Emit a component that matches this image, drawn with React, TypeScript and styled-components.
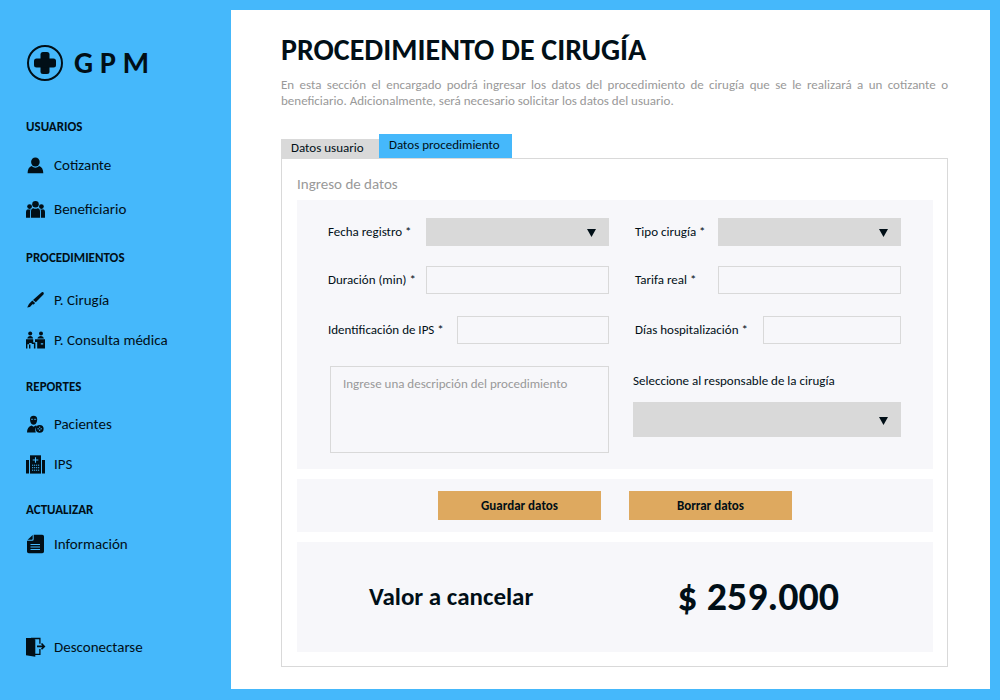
import React from "react";
import styled, { createGlobalStyle } from "styled-components";

const color = {
  blue: "#45b8fb",
  ink: "#010f17",
  muted: "#999999",
  line: "#d9d9d9",
  panel: "#f7f7fa",
  gold: "#dea95f",
};

const GlobalStyle = createGlobalStyle`
  *, *::before, *::after { box-sizing: border-box; }
  body {
    margin: 0;
    background: ${color.blue};
    color: ${color.ink};
    font-family: Calibri, Carlito, Lato, sans-serif;
    font-size: 13px;
    line-height: 16px;
  }
  button, input, select, textarea { font: inherit; color: inherit; }
`;

const Page = styled.div`
  display: flex;
  min-height: 100vh;
  padding: 10px 10px 11px 0;
`;

const Sidebar = styled.aside`
  flex: 0 0 231px;
  display: flex;
  flex-direction: column;
  padding: 34px 10px 22px 26px;
`;

const Brand = styled.div`
  display: flex;
  align-items: center;
  gap: 10px;
  height: 38px;
  margin-bottom: 35px;
  font-size: 30px;
  line-height: 38px;
  font-weight: 700;
`;

const NavGroup = styled.section<{ $after: number }>`
  margin-bottom: ${(p) => p.$after}px;
`;

const NavHeading = styled.h2<{ $after: number }>`
  margin: 0 0 ${(p) => p.$after}px;
  font-size: 13px;
  line-height: 20px;
  font-weight: 700;
`;

const NavList = styled.ul<{ $gap?: number }>`
  display: flex;
  flex-direction: column;
  gap: ${(p) => p.$gap ?? 0}px;
  margin: 0;
  padding: 0;
  list-style: none;
`;

const NavLink = styled.a`
  display: flex;
  align-items: center;
  gap: 8px;
  height: 40px;
  color: inherit;
  font-size: 15px;
  line-height: 20px;
  text-decoration: none;
`;

const Logout = styled(NavLink)`
  margin-top: auto;
`;

const Main = styled.main`
  flex: 1;
  min-width: 0;
  display: flex;
  flex-direction: column;
  padding: 22px 42px 22px 50px;
  background: #fff;
`;

const Title = styled.h1`
  margin: 0 0 9px;
  font-size: 30px;
  line-height: 36px;
  font-weight: 700;
`;

const Intro = styled.p`
  margin: 0 0 25px;
  color: ${color.muted};
  text-align: justify;
`;

const Tabs = styled.div`
  display: flex;
  align-items: flex-end;
`;

const Tab = styled.button<{ $active?: boolean }>`
  height: ${(p) => (p.$active ? 24 : 19)}px;
  min-width: ${(p) => (p.$active ? 133 : 98)}px;
  padding: 0 10px 2px;
  border: 0;
  background: ${(p) => (p.$active ? color.blue : color.line)};
  text-align: left;
  white-space: nowrap;
`;

const Card = styled.form`
  flex: 1;
  display: flex;
  flex-direction: column;
  gap: 10px;
  padding: 15px 14px 14px 15px;
  border: 1px solid ${color.line};
`;

const CardTitle = styled.h2`
  margin: 0 0 -4px;
  color: ${color.muted};
  font-size: 15px;
  line-height: 20px;
  font-weight: 400;
`;

const Fields = styled.div`
  display: grid;
  grid-template-columns: minmax(0, 281fr) minmax(0, 268fr);
  grid-template-rows: 48px 50px 50px auto;
  column-gap: 24px;
  align-items: start;
  padding: 18px 32px 16px 31px;
  background: ${color.panel};
`;

const Field = styled.div<{ $inset?: boolean }>`
  display: flex;
  align-items: center;
  padding-left: ${(p) => (p.$inset ? 2 : 0)}px;
`;

const Label = styled.label<{ $width: number }>`
  flex: 0 0 ${(p) => p.$width}px;
  white-space: nowrap;
`;

const TextInput = styled.input`
  flex: 1;
  min-width: 0;
  height: 28px;
  padding: 0 8px;
  border: 1px solid ${color.line};
  border-radius: 0;
  background: transparent;
`;

const SelectBox = styled.div<{ $tall?: boolean }>`
  position: relative;
  flex: 1;
  min-width: 0;
  height: ${(p) => (p.$tall ? 35 : 28)}px;

  select {
    display: block;
    width: 100%;
    height: 100%;
    padding: 0 30px 0 8px;
    border: 0;
    border-radius: 0;
    background: ${color.line};
    appearance: none;
  }

  svg {
    position: absolute;
    right: 13px;
    top: calc(50% - 3px);
    pointer-events: none;
  }
`;

const Description = styled.textarea`
  display: block;
  height: 87px;
  margin-left: 2px;
  padding: 9px 12px;
  border: 1px solid ${color.line};
  border-radius: 0;
  background: transparent;
  resize: none;

  &::placeholder { color: ${color.muted}; opacity: 1; }
`;

const Responsible = styled.div`
  label {
    display: block;
    margin-bottom: 6px;
    line-height: 30px;
  }
`;

const Actions = styled.div`
  display: flex;
  justify-content: center;
  gap: 28px;
  padding: 12px;
  background: ${color.panel};
`;

const ActionButton = styled.button`
  width: 163px;
  height: 29px;
  padding: 0;
  border: 0;
  background: ${color.gold};
  font-weight: 700;
`;

const Total = styled.div`
  flex: 1;
  display: flex;
  align-items: center;
  justify-content: space-between;
  min-height: 110px;
  padding: 0 94px 0 72px;
  background: ${color.panel};
  font-weight: 700;
`;

const TotalLabel = styled.span`
  font-size: 25px;
  line-height: 32px;
`;

const TotalAmount = styled.output`
  font-size: 40px;
  line-height: 48px;
`;

function Icon({ children }: { children: React.ReactNode }) {
  return (
    <svg width="20" height="20" viewBox="0 0 20 20" fill={color.ink} aria-hidden="true">
      {children}
    </svg>
  );
}

const LogoIcon = () => (
  <svg width="38" height="38" viewBox="0 0 38 38" fill={color.ink} aria-hidden="true">
    <circle cx="19" cy="19" r="17" fill="none" stroke={color.ink} strokeWidth="2" />
    <rect x="14.5" y="8" width="9" height="22" rx="2.5" />
    <rect x="8" y="14.5" width="22" height="9" rx="2.5" />
  </svg>
);

const UserIcon = () => (
  <Icon>
    <ellipse cx="9.4" cy="7" rx="4.3" ry="4.5" />
    <path d="M1.6 18.2C1.6 14.400 2.900 12.200 5.700 11C8 13.200 10.800 13.200 13.100 11C15.900 12.200 17.300 14.400 17.300 18.200Z" />
  </Icon>
);

const GroupIcon = () => (
  <Icon>
    <circle cx="9.5" cy="5.3" r="3.3" />
    <circle cx="3.6" cy="7.6" r="2.4" />
    <circle cx="15.4" cy="7.6" r="2.4" />
    <path d="M5 18.8V12.4Q5 9.4 7.4 9.2Q9.5 10.4 11.6 9.200Q14 9.400 14 12.400V18.800Z" />
    <path d="M0 18.800V12.800Q0 10.400 2 10.200Q3.300 10.800 4.600 10.300Q4.100 11.200 4.100 12.600V18.800Z" />
    <path d="M19 18.800V12.800Q19 10.400 17 10.200Q15.700 10.800 14.400 10.300Q14.900 11.200 14.900 12.600V18.800Z" />
  </Icon>
);

const ScalpelIcon = () => (
  <Icon>
    <path d="M17.300 2.300Q18.400 3.300 17.400 4.500L9.800 12.200L7 9.900L14.900 2.900Q16.300 1.700 17.300 2.300Z" />
    <path d="M6.300 10.500L9.100 12.900L7.700 14.400L6.400 14.200Q4.800 17.200 1.200 17.600Q2 14.200 6.300 10.500Z" />
  </Icon>
);

const ConsultIcon = () => (
  <Icon>
    <circle cx="4.2" cy="3.500" r="2" />
    <circle cx="15" cy="3.500" r="2" />
    <path d="M1.400 8.600Q1.600 5.900 4.200 5.900Q6.800 5.900 7 8.600Z" />
    <path d="M11.400 8.600Q12 5.900 15 5.900Q17.500 5.900 18 8.600Z" />
    <path d="M0 9.200H7.200V12.400H9.400V18.600H7.900V14H5.700V13H3.200V14.200H1.400V18.600H0Z" />
    <path d="M3 14.600H4.400V18.600H3Z" />
    <path d="M9 9.200H19V18.600H11.200V12H9ZM14.800 13.200V14.400H17.200V13.200Z" fillRule="evenodd" />
  </Icon>
);

const PatientIcon = () => (
  <Icon>
    <path d="M4 5.400Q4 1.700 7.600 1.700Q11.200 1.700 11.200 5.400L10.900 7.600Q10 10.800 7.600 10.800Q5.200 10.800 4.300 7.600Z" />
    <path d="M5 5.300H7.100M8.100 5.300H10.200" fill="none" stroke={color.blue} strokeWidth=".8" />
    <path d="M1 18.600Q1 12.600 5.500 11.400L7.600 12.800L9.700 11.400Q10.500 11.600 11 12Q8.300 14.600 9.800 18.600Z" />
    <circle cx="13.700" cy="14.800" r="3.900" />
    <path d="M13.700 12.600V17M11.500 14.800H15.900" fill="none" stroke={color.blue} strokeWidth="1" />
    <circle cx="13.700" cy="14.800" r="1" />
  </Icon>
);

const HospitalIcon = () => (
  <Icon>
    <path d="M4 1.300H15V19.600H4Z" />
    <path d="M0 6H3V19.600H0ZM16 6H19V19.600H16Z" />
    <path d="M9.500 3.200V8.800M6.700 6H12.300" fill="none" stroke={color.blue} strokeWidth="1.100" />
    <path
      d="M6 11.200H13.200M6 13.700H13.200M6 16.200H13.200"
      fill="none"
      stroke={color.blue}
      strokeWidth="1"
      strokeDasharray="1.200 .8"
    />
  </Icon>
);

const FileIcon = () => (
  <Icon>
    <path d="M7.700 .7H16.200Q18 .7 18 2.500V17.500Q18 19.300 16.200 19.300H2.800Q1 19.300 1 17.500V6.800H6.200Q7.700 6.800 7.700 5.300Z" />
    <path d="M6.700 1V4.800Q6.700 5.800 5.700 5.800H1.600Z" />
    <path d="M4.500 10.500H14M4.500 13H14M4.500 15.500H14" fill="none" stroke={color.blue} strokeWidth="1.100" />
  </Icon>
);

const ExitIcon = () => (
  <Icon>
    <path d="M0 .9H6L9.300 2.600V19.800L0 18.200Z" />
    <path d="M5 1.500H13.900V6.800M13.900 12V17.300H9" fill="none" stroke={color.ink} strokeWidth="1.300" />
    <path d="M11 9.400H18M15.500 6.500L18.300 9.400L15.500 12.300" fill="none" stroke={color.ink} strokeWidth="1.600" />
  </Icon>
);

function Select({ id, tall }: { id: string; tall?: boolean }) {
  return (
    <SelectBox $tall={tall}>
      <select id={id} defaultValue="">
        <option value="" />
      </select>
      <svg width="9" height="8" viewBox="0 0 9 8" fill={color.ink} aria-hidden="true">
        <path d="M0 0H9L4.500 8Z" />
      </svg>
    </SelectBox>
  );
}

function NavItem({ icon, children }: { icon: React.ReactNode; children: React.ReactNode }) {
  return (
    <li>
      <NavLink href="#">
        {icon}
        {children}
      </NavLink>
    </li>
  );
}

export default function App() {
  return (
    <>
      <GlobalStyle />
      <Page>
        <Sidebar>
          <Brand>
            <LogoIcon />
            G P M
          </Brand>
          <NavGroup $after={19}>
            <NavHeading $after={8}>USUARIOS</NavHeading>
            <NavList $gap={4}>
              <NavItem icon={<UserIcon />}>Cotizante</NavItem>
              <NavItem icon={<GroupIcon />}>Beneficiario</NavItem>
            </NavList>
          </NavGroup>
          <NavGroup $after={17}>
            <NavHeading $after={12}>PROCEDIMIENTOS</NavHeading>
            <NavList>
              <NavItem icon={<ScalpelIcon />}>P. Cirugía</NavItem>
              <NavItem icon={<ConsultIcon />}>P. Consulta médica</NavItem>
            </NavList>
          </NavGroup>
          <NavGroup $after={16}>
            <NavHeading $after={7}>REPORTES</NavHeading>
            <NavList>
              <NavItem icon={<PatientIcon />}>Pacientes</NavItem>
              <NavItem icon={<HospitalIcon />}>IPS</NavItem>
            </NavList>
          </NavGroup>
          <NavGroup $after={16}>
            <NavHeading $after={4}>ACTUALIZAR</NavHeading>
            <NavList>
              <NavItem icon={<FileIcon />}>Información</NavItem>
            </NavList>
          </NavGroup>
          <Logout href="#">
            <ExitIcon />
            Desconectarse
          </Logout>
        </Sidebar>

        <Main>
          <Title>PROCEDIMIENTO DE CIRUGÍA</Title>
          <Intro>
            En esta sección el encargado podrá ingresar los datos del procedimiento de cirugía que se le
            realizará a un cotizante o beneficiario. Adicionalmente, será necesario solicitar los datos del
            usuario.
          </Intro>
          <Tabs role="tablist">
            <Tab type="button" role="tab" aria-selected={false}>Datos usuario</Tab>
            <Tab type="button" role="tab" aria-selected $active>Datos procedimiento</Tab>
          </Tabs>
          <Card onSubmit={(e) => e.preventDefault()}>
            <CardTitle>Ingreso de datos</CardTitle>
            <Fields>
              <Field>
                <Label $width={98} htmlFor="fecha">Fecha registro *</Label>
                <Select id="fecha" />
              </Field>
              <Field $inset>
                <Label $width={83} htmlFor="tipo">Tipo cirugía *</Label>
                <Select id="tipo" />
              </Field>
              <Field>
                <Label $width={98} htmlFor="duracion">Duración (min) *</Label>
                <TextInput id="duracion" />
              </Field>
              <Field $inset>
                <Label $width={83} htmlFor="tarifa">Tarifa real *</Label>
                <TextInput id="tarifa" />
              </Field>
              <Field>
                <Label $width={129} htmlFor="ips">Identificación de IPS *</Label>
                <TextInput id="ips" />
              </Field>
              <Field $inset>
                <Label $width={128} htmlFor="dias">Días hospitalización *</Label>
                <TextInput id="dias" />
              </Field>
              <Description
                aria-label="Descripción del procedimiento"
                placeholder="Ingrese una descripción del procedimiento"
              />
              <Responsible>
                <label htmlFor="responsable">Seleccione al responsable de la cirugía</label>
                <Select id="responsable" tall />
              </Responsible>
            </Fields>
            <Actions>
              <ActionButton type="submit">Guardar datos</ActionButton>
              <ActionButton type="reset">Borrar datos</ActionButton>
            </Actions>
            <Total>
              <TotalLabel>Valor a cancelar</TotalLabel>
              <TotalAmount>$ 259.000</TotalAmount>
            </Total>
          </Card>
        </Main>
      </Page>
    </>
  );
}
